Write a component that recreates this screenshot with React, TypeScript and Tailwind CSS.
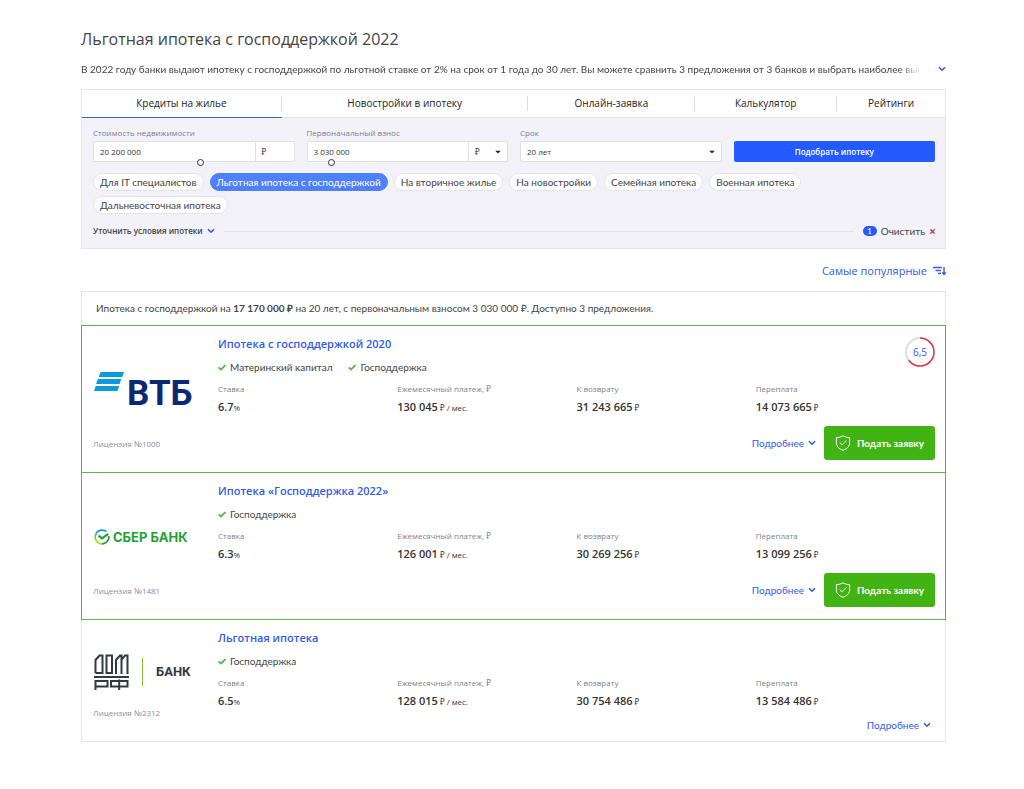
import { useState } from 'react'
import type { ReactNode } from 'react'
import clsx from 'clsx'

type Offer = {
  title: string
  logo: ReactNode
  licence: string
  tags: string[]
  rate: string
  payment: string
  total: string
  overpay: string
  rating?: string
  featured: boolean
}

const tabs = ['Кредиты на жилье', 'Новостройки в ипотеку', 'Онлайн-заявка', 'Калькулятор', 'Рейтинги']

const programs = [
  'Для IT специалистов',
  'Льготная ипотека с господдержкой',
  'На вторичное жилье',
  'На новостройки',
  'Семейная ипотека',
  'Военная ипотека',
  'Дальневосточная ипотека',
]

const offers: Offer[] = [
  {
    title: 'Ипотека с господдержкой 2020',
    logo: <VtbLogo />,
    licence: '1000',
    tags: ['Материнский капитал', 'Господдержка'],
    rate: '6.7',
    payment: '130 045',
    total: '31 243 665',
    overpay: '14 073 665',
    rating: '6,5',
    featured: true,
  },
  {
    title: 'Ипотека «Господдержка 2022»',
    logo: <SberLogo />,
    licence: '1481',
    tags: ['Господдержка'],
    rate: '6.3',
    payment: '126 001',
    total: '30 269 256',
    overpay: '13 099 256',
    featured: true,
  },
  {
    title: 'Льготная ипотека',
    logo: <DomLogo />,
    licence: '2312',
    tags: ['Господдержка'],
    rate: '6.5',
    payment: '128 015',
    total: '30 754 486',
    overpay: '13 584 486',
    featured: false,
  },
]

function Chevron() {
  return (
    <svg className="h-[6px] w-2 shrink-0" viewBox="0 0 8 6" fill="none" stroke="#2f5bea" strokeWidth="1.6">
      <path d="M1 1.2 4 4.2 7 1.2" />
    </svg>
  )
}

function Caret() {
  return (
    <svg className="pointer-events-none absolute top-1/2 right-[6px] h-[3px] w-[6px] -translate-y-1/2" viewBox="0 0 6 3">
      <path d="M0 0h6L3 3z" fill="#222" />
    </svg>
  )
}

function Check() {
  return (
    <svg className="h-[7px] w-2 shrink-0" viewBox="0 0 8 7" fill="none" stroke="#4cb748" strokeWidth="1.8">
      <path d="M.7 3.4 3 5.6 7.4 1" />
    </svg>
  )
}

function VtbLogo() {
  return (
    <div className="flex h-9 items-start gap-[3px]">
      <svg className="h-[19px] w-[30px] shrink-0" viewBox="0 0 30 19" fill="#0a9bdc">
        <path d="M6.5 0H30l-1.7 5H4.8z" />
        <path d="M3.8 7H27.3l-1.7 5H2.1z" />
        <path d="M1.7 14H25.2l-1.7 5H0z" />
      </svg>
      <span className="pt-[6px] font-[Roboto,sans-serif] text-[35px] leading-8 font-bold text-[#0a2973]">ВТБ</span>
    </div>
  )
}

function SberLogo() {
  return (
    <div className="flex items-center gap-[3px]">
      <svg className="size-4 shrink-0" viewBox="0 0 16 16" fill="none" strokeWidth="1.7">
        <defs>
          <linearGradient id="sber" x1="0" y1="1" x2="0.6" y2="0">
            <stop offset="0" stopColor="#f2e600" />
            <stop offset="0.45" stopColor="#5cc46a" />
            <stop offset="0.8" stopColor="#1592d8" />
          </linearGradient>
        </defs>
        <path d="M12.4 2.6A6.9 6.9 0 1 0 8 14.9" stroke="url(#sber)" />
        <path d="M8 14.9A6.9 6.9 0 0 0 14.8 7" stroke="#21a038" />
        <path d="M4.5 6.6 8 9.3 14.2 4.8" stroke="#21a038" strokeWidth="2.2" />
      </svg>
      <span className="font-[Inter,sans-serif] text-[13px] leading-4 font-bold whitespace-nowrap text-[#21a038]">СБЕР БАНК</span>
    </div>
  )
}

function DomLogo() {
  return (
    <div className="flex items-center">
      <svg className="h-9 w-[35px] shrink-0" viewBox="0 0 35 36" fill="none" stroke="#2f3a42" strokeWidth="2">
        <path d="M1.5 19V6L5.5 1.5H8.5V19H1.5M12.5 1.5H18V19H12.5zM22 20V6L26 1.5H27.5V20M27.5 6 31 1.5H33.5V20" />
        <path d="M0 23H35" />
        <path d="M1.5 36V27H13.5V32.5H1.5M17 27H33.5V32.5H17zM25.2 25.5V36" />
      </svg>
      <span className="mx-[13px] h-7 w-px bg-[#84c341]" />
      <span className="font-[Roboto,sans-serif] text-[13px] leading-4 font-bold text-[#2f3a42]">БАНК</span>
    </div>
  )
}

function RatingRing({ value }: { value: string }) {
  return (
    <div className="relative mt-[3px] size-[30px] shrink-0">
      <svg className="size-full -rotate-90" viewBox="0 0 30 30" fill="none" strokeWidth="1.5">
        <circle cx="15" cy="15" r="14" stroke="#d8d8dc" />
        <circle cx="15" cy="15" r="14" stroke="#e0383e" pathLength={100} strokeDasharray="65 100" />
      </svg>
      <span className="absolute inset-0 flex items-center justify-center text-[10px] text-[#2f5bea]">{value}</span>
    </div>
  )
}

function Metric({ label, value, unit }: { label: string; value: string; unit: string }) {
  return (
    <div className="whitespace-nowrap">
      <dt className="text-[8px] leading-[14px] text-[#7d7f8c]">{label}</dt>
      <dd className="mt-[2px] text-[8px] leading-[18px] text-[#333]">
        <span className="text-[11px] font-semibold text-[#333]">{value}</span>
        {unit}
      </dd>
    </div>
  )
}

function OfferCard({ offer }: { offer: Offer }) {
  const { featured } = offer
  return (
    <article
      className={clsx(
        'flex border pr-[10px] pl-[11px]',
        featured ? '-mt-px border-[#62b350]' : 'border-t-0 border-[#e3e3e8]',
      )}
    >
      <div className="flex w-[125px] shrink-0 flex-col pt-4 pb-[22px]">
        <div className="flex flex-1 items-center pl-px">{offer.logo}</div>
        <p className="text-[8px] leading-3 text-[#8b8d98]">Лицензия №{offer.licence}</p>
      </div>
      <div className="min-w-0 flex-1 pt-2">
        <div className="flex items-start justify-between">
          <div>
            <h2 className="text-[11px] leading-5 font-semibold">
              <a href="#" className="text-[#2f5bea]">
                {offer.title}
              </a>
            </h2>
            <ul className="mt-1 flex gap-4 font-[Lato,'Open_Sans',sans-serif] text-[10px] leading-[18px] text-[#444]">
              {offer.tags.map((tag) => (
                <li key={tag} className="flex items-center gap-1">
                  <Check />
                  {tag}
                </li>
              ))}
            </ul>
          </div>
          {offer.rating && <RatingRing value={offer.rating} />}
        </div>
        <dl className="mt-[6px] grid grid-cols-4">
          <Metric label="Ставка" value={offer.rate} unit="%" />
          <Metric label="Ежемесячный платеж, ₽" value={offer.payment} unit=" ₽ / мес." />
          <Metric label="К возврату" value={offer.total} unit=" ₽" />
          <Metric label="Переплата" value={offer.overpay} unit=" ₽" />
        </dl>
        <div
          className={clsx(
            "flex items-center justify-end font-[Lato,'Open_Sans',sans-serif]",
            featured ? 'mt-[9px] mb-3 gap-2' : 'mt-[5px] mb-[7px] pr-1',
          )}
        >
          <button type="button" className="flex items-center gap-1 text-[10px] leading-[18px] text-[#2f5bea]">
            Подробнее
            <Chevron />
          </button>
          {featured && (
            <button
              type="button"
              className="flex h-[34px] items-center gap-[6px] rounded-[3px] bg-[#41b314] px-[11px] text-[10px] font-bold whitespace-nowrap text-white"
            >
              <svg className="size-4 shrink-0" viewBox="0 0 16 16" fill="none" stroke="currentColor" strokeLinejoin="round">
                <path d="M8 .8C10 2 12.3 2.6 14.6 2.7V8C14.6 11.5 11.8 14 8 15.3 4.2 14 1.4 11.5 1.4 8V2.7C3.7 2.6 6 2 8 .8z" />
                <path d="M5 7.8 7.2 9.9 11 5.8" strokeLinecap="round" />
              </svg>
              Подать заявку
            </button>
          )}
        </div>
      </div>
    </article>
  )
}

function MoneyField(props: { id: string; label: string; initial: string; step: number; children: ReactNode }) {
  const { id, label, initial, step, children } = props
  const [value, setValue] = useState(initial)
  const [position, setPosition] = useState(step)
  return (
    <div className="relative min-w-0">
      <label htmlFor={id} className="block text-[8px] leading-4 text-[#7d7f8c]">
        {label}
      </label>
      <div className="flex h-[21px] rounded-[2px] border border-[#dfdfe6] bg-white text-[8px] text-[#333]">
        <input
          id={id}
          value={value}
          onChange={(e) => setValue(e.target.value)}
          className="min-w-0 flex-1 px-[6px] outline-none"
        />
        <div className="relative w-[39px] shrink-0 border-l border-[#dfdfe6]">{children}</div>
      </div>
      <input
        type="range"
        aria-label={label}
        min={0}
        max={1000}
        value={position}
        onChange={(e) => setPosition(Number(e.target.value))}
        className="absolute inset-x-0 -bottom-1 h-[7px] w-full appearance-none bg-transparent [&::-webkit-slider-thumb]:size-[7px] [&::-webkit-slider-thumb]:appearance-none [&::-webkit-slider-thumb]:rounded-full [&::-webkit-slider-thumb]:border [&::-webkit-slider-thumb]:border-[#333] [&::-webkit-slider-thumb]:bg-white"
      />
    </div>
  )
}

function SearchPanel() {
  const [program, setProgram] = useState(programs[1])
  return (
    <section className="mt-[11px] border border-[#e3e3e8] bg-[#f2f2f8]">
      <nav className="grid h-7 grid-cols-[200fr_247fr_167fr_142fr_108fr] bg-white text-[10px] text-[#222]">
        {tabs.map((tab, i) => (
          <a
            key={tab}
            href="#"
            className={clsx('flex items-center border-b whitespace-nowrap', i === 0 ? 'border-[#3a66b8]' : 'border-[#e3e3e8]')}
          >
            <span className={clsx('flex-1 text-center', i < tabs.length - 1 && 'border-r border-[#dcdce2]')}>{tab}</span>
          </a>
        ))}
      </nav>
      <form className="pt-[7px] pr-[10px] pb-[9px] pl-[11px]" onSubmit={(e) => e.preventDefault()}>
        <div className="grid grid-cols-4 items-end gap-3">
          <MoneyField id="price" label="Стоимость недвижимости" initial="20 200 000" step={533}>
            <span className="flex h-full items-center pl-[6px]">₽</span>
          </MoneyField>
          <MoneyField id="down" label="Первоначальный взнос" initial="3 030 000" step={112}>
            <select aria-label="Единица взноса" className="size-full appearance-none pl-[6px] outline-none">
              <option>₽</option>
              <option>%</option>
            </select>
            <Caret />
          </MoneyField>
          <div>
            <label htmlFor="term" className="block text-[8px] leading-4 text-[#7d7f8c]">
              Срок
            </label>
            <div className="relative h-[21px] rounded-[2px] border border-[#dfdfe6] bg-white text-[8px] text-[#333]">
              <select id="term" defaultValue="20" className="size-full appearance-none px-[6px] outline-none">
                <option value="10">10 лет</option>
                <option value="20">20 лет</option>
                <option value="30">30 лет</option>
              </select>
              <Caret />
            </div>
          </div>
          <button type="submit" className="h-[21px] rounded-[2px] bg-[#245bff] text-[8px] font-semibold text-white">
            Подобрать ипотеку
          </button>
        </div>
        <div className="mt-[11px] flex flex-wrap gap-x-[6px] gap-y-[5px]">
          {programs.map((name) => (
            <button
              key={name}
              type="button"
              onClick={() => setProgram(name)}
              className={clsx(
                "h-[18px] rounded-full border px-[6px] font-[Lato,'Open_Sans',sans-serif] text-[10px] leading-4 whitespace-nowrap",
                name === program ? 'border-[#4f80fb] bg-[#4f80fb] text-white' : 'border-[#e3e3ea] bg-white text-[#444]',
              )}
            >
              {name}
            </button>
          ))}
        </div>
        <div className="mt-[9px] flex items-center text-[8px] leading-4">
          <button type="button" className="flex items-center gap-1 font-semibold text-[#444]">
            Уточнить условия ипотеки
            <Chevron />
          </button>
          <span className="mx-[9px] h-px flex-1 bg-[#e3e3ea]" />
          <button type="button" className="flex items-center gap-1 font-[Lato,'Open_Sans',sans-serif] text-[10px] text-[#444]">
            <span className="rounded-full bg-[#245bff] px-[5px] text-[7px] leading-[10px] font-semibold text-white">1</span>
            Очистить
            <svg className="ml-px size-[5px]" viewBox="0 0 5 5" stroke="#d8333f" strokeWidth="1.4">
              <path d="M.4 .4 4.6 4.6M4.6 .4 .4 4.6" />
            </svg>
          </button>
        </div>
      </form>
    </section>
  )
}

export default function App() {
  return (
    <main className="min-h-screen bg-white pt-[27px] pr-[78px] pb-12 pl-[81px] font-['Open_Sans','Noto_Sans',sans-serif]">
      <h1 className="text-[16px] leading-6 text-[#444]">Льготная ипотека с господдержкой 2022</h1>
      <div className="mt-[9px] flex items-center gap-4 font-[Lato,'Open_Sans',sans-serif] text-[10px] leading-[18px] text-[#444]">
        <p className="min-w-0 flex-1 overflow-hidden whitespace-nowrap [mask-image:linear-gradient(to_left,transparent,black_24px)]">
          В 2022 году банки выдают ипотеку с господдержкой по льготной ставке от 2% на срок от 1 года до 30 лет. Вы можете
          сравнить 3 предложения от 3 банков и выбрать наиболее выгодное.
        </p>
        <button type="button" aria-label="Показать полностью">
          <Chevron />
        </button>
      </div>
      <SearchPanel />
      <div className="mt-[13px] flex justify-end">
        <button type="button" className="flex items-center gap-[6px] text-[11px] leading-[18px] text-[#2f5bea]">
          Самые популярные
          <svg className="h-[10px] w-[13px]" viewBox="0 0 13 10" fill="none" stroke="currentColor" strokeWidth="1.4">
            <path d="M0 1.5H9M2.5 4.5H8M5 7.5H8M11 1V8M9.2 6.4 11 8.4 12.8 6.4" />
          </svg>
        </button>
      </div>
      <section className="mt-[11px]">
        <p className="border border-[#e3e3e8] px-[14px] py-2 font-[Lato,'Open_Sans',sans-serif] text-[10px] leading-[17px] text-[#444]">
          Ипотека с господдержкой на <b className="font-bold">17 170 000 ₽</b> на 20 лет, с первоначальным взносом 3 030 000 ₽.
          Доступно 3 предложения.
        </p>
        {offers.map((offer) => (
          <OfferCard key={offer.title} offer={offer} />
        ))}
      </section>
    </main>
  )
}
